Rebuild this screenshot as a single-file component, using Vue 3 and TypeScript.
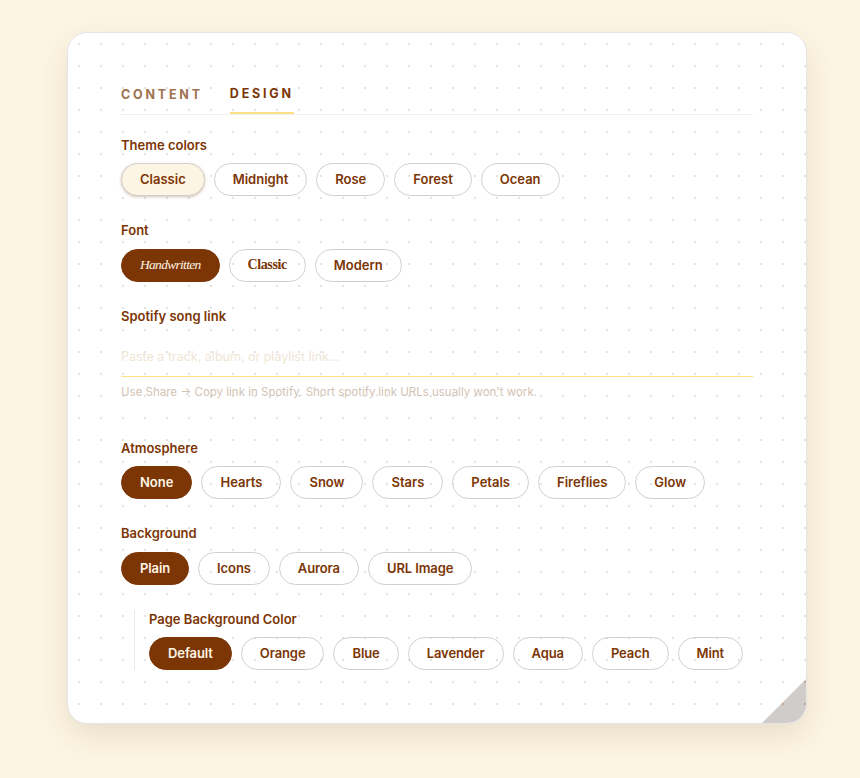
<script setup lang="ts">
interface Pill { label: string; active?: boolean; soft?: boolean; kind?: string }
const pills = (names: string[], active: string, soft = false): Pill[] =>
  names.map((label) => ({ label, active: label === active && !soft, soft: label === active && soft }))

const themes = pills(['Classic', 'Midnight', 'Rose', 'Forest', 'Ocean'], 'Classic', true)
const fonts: Pill[] = [
  { label: 'Handwritten', active: true, kind: 'hand' },
  { label: 'Classic', kind: 'serif' },
  { label: 'Modern' },
]
const atmospheres = pills(['None', 'Hearts', 'Snow', 'Stars', 'Petals', 'Fireflies', 'Glow'], 'None')
const backgrounds = pills(['Plain', 'Icons', 'Aurora', 'URL Image'], 'Plain')
const pageColors = pills(['Default', 'Orange', 'Blue', 'Lavender', 'Aqua', 'Peach', 'Mint'], 'Default')
</script>

<template>
  <main class="page">
    <section class="card">
      <nav class="tabs">
        <button class="tab">CONTENT</button>
        <button class="tab tab-on">DESIGN</button>
      </nav>

      <div class="group theme">
        <h3 class="label tight">Theme colors</h3>
        <div class="row">
          <button v-for="p in themes" :key="p.label" class="pill" :class="{ on: p.active, soft: p.soft }">{{ p.label }}</button>
        </div>
      </div>

      <div class="group font">
        <h3 class="label">Font</h3>
        <div class="row">
          <button v-for="p in fonts" :key="p.label" class="pill" :class="[{ on: p.active }, p.kind]">{{ p.label }}</button>
        </div>
      </div>

      <div class="group spotify">
        <h3 class="label">Spotify song link</h3>
        <input class="link" type="text" placeholder="Paste a track, album, or playlist link..." />
        <p class="hint">Use Share → Copy link in Spotify. Short spotify.link URLs usually won't work.</p>
      </div>

      <div class="group atmosphere">
        <h3 class="label tight">Atmosphere</h3>
        <div class="row">
          <button v-for="p in atmospheres" :key="p.label" class="pill" :class="{ on: p.active }">{{ p.label }}</button>
        </div>
      </div>

      <div class="group background">
        <h3 class="label">Background</h3>
        <div class="row compact">
          <button v-for="p in backgrounds" :key="p.label" class="pill" :class="{ on: p.active }">{{ p.label }}</button>
        </div>
      </div>

      <div class="sub">
        <h3 class="label tight">Page Background Color</h3>
        <div class="row compact">
          <button v-for="p in pageColors" :key="p.label" class="pill" :class="{ on: p.active }">{{ p.label }}</button>
        </div>
      </div>

      <span class="fold"></span>
    </section>
  </main>
</template>

<style>
html, body { margin: 0; background: #fdf5e3; }
</style>

<style scoped>
.page {
  box-sizing: border-box;
  width: 860px;
  height: 778px;
  padding: 32px 53px 0 67px;
  background: #fdf5e3;
  font-family: Inter, "Noto Sans", sans-serif;
  overflow: hidden;
}
.card {
  position: relative;
  box-sizing: border-box;
  width: 740px;
  height: 692px;
  padding: 48px 53px 0;
  border: 1px solid #e5e4e8;
  border-radius: 20px;
  background-color: #fff;
  background-image: radial-gradient(circle at 11px 11px, #e2e2e2 1.2px, transparent 1.3px);
  background-size: 22px 22px;
  box-shadow: 0 12px 30px rgba(60, 40, 10, 0.11);
  overflow: hidden;
}
.tabs {
  display: flex;
  gap: 27px;
  box-sizing: border-box;
  height: 34px;
  border-bottom: 1px solid #f0eeee;
}
.tab {
  height: 33px;
  padding: 0 0 7px;
  border: 0;
  background: none;
  color: #a0714f;
  font: 700 12.5px Inter, sans-serif;
  letter-spacing: 2.8px;
}
.tab-on {
  padding-bottom: 9px;
  box-shadow: inset 0 -2px 0 #fbe085;
  color: #7c3505;
}
.group { display: block; }
.theme { margin-top: 21px; }
.font { margin-top: 25px; }
.spotify { margin-top: 25px; }
.atmosphere { margin-top: 39px; }
.background { margin-top: 25px; }
.label {
  margin: 0 0 10px;
  color: #7c3505;
  font-size: 13px;
  line-height: 18px;
  font-weight: 600;
}
.tight { margin-bottom: 9px; }
.row { display: flex; gap: 9px; }
.compact .pill { letter-spacing: -0.1px; }
.pill {
  box-sizing: border-box;
  height: 33px;
  padding: 0 18px 2px;
  border: 1px solid #d3cfcc;
  border-radius: 17px;
  background: transparent;
  color: #7c3505;
  font: 600 13px Inter, sans-serif;
  white-space: nowrap;
}
.on {
  border-color: #7c3505;
  background: #7c3505;
  color: #fff6e5;
}
.soft {
  background: #fdf5e3;
  box-shadow: 0 1px 3px rgba(124, 53, 5, 0.3);
}
.hand { font: italic 400 13.5px "Liberation Serif", serif; letter-spacing: -0.7px; }
.serif { font: 700 14px "Liberation Serif", serif; letter-spacing: -0.4px; }
.link {
  display: block;
  box-sizing: border-box;
  width: 100%;
  height: 42px;
  margin-top: 1px;
  padding: 2px 0 0;
  border: 0;
  border-bottom: 1px solid #fbe085;
  outline: 0;
  background: transparent;
  font: 400 12.5px Inter, sans-serif;
}
.link::placeholder { color: #efe5d5; opacity: 1; }
.hint {
  margin: 7px 0 0;
  color: #d3c3b4;
  font-size: 11.5px;
  line-height: 16px;
}
.sub {
  box-sizing: border-box;
  height: 60px;
  margin: 26px 0 0 13px;
  padding-left: 14px;
  border-left: 1px solid #ebe8e6;
}
.sub .label { margin-top: -1px; }
.fold {
  position: absolute;
  right: 0;
  bottom: 0;
  width: 44px;
  height: 44px;
  background-color: #d0ccc9;
  background-image: radial-gradient(circle at center, #c9a98c 1px, transparent 1.3px);
  background-size: 22px 22px;
  background-position: 10px -8px;
  clip-path: polygon(100% 0, 100% 100%, 0 100%);
}
</style>
